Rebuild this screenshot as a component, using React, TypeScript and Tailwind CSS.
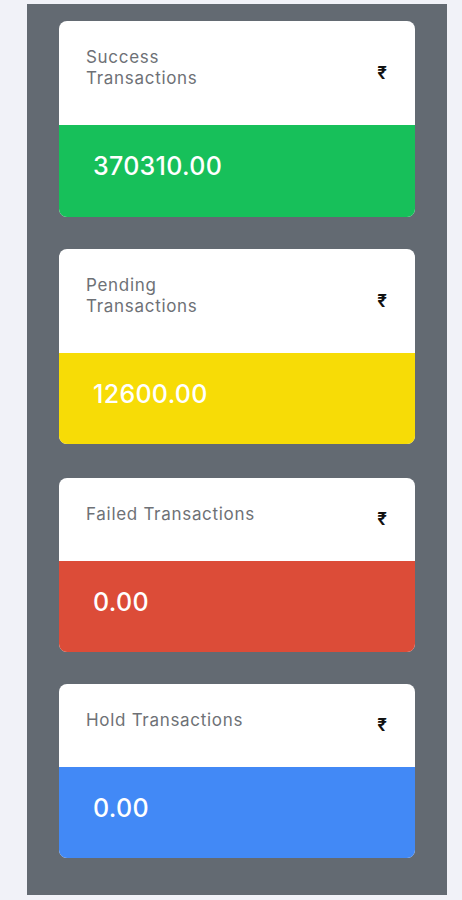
import React from 'react';

type Stat = {
  title: React.ReactNode;
  amount: string;
  color: string;
  header: string;
  body: string;
};

const stats: Stat[] = [
  {
    title: (
      <>
        Success
        <br />
        Transactions
      </>
    ),
    amount: '370310.00',
    color: 'bg-[#17c05a]',
    header: 'h-[104px]',
    body: 'h-[92px]',
  },
  {
    title: (
      <>
        Pending
        <br />
        Transactions
      </>
    ),
    amount: '12600.00',
    color: 'bg-[#f7dc06]',
    header: 'h-[104px]',
    body: 'h-[91px]',
  },
  {
    title: 'Failed Transactions',
    amount: '0.00',
    color: 'bg-[#dc4c38]',
    header: 'h-[83px]',
    body: 'h-[91px]',
  },
  {
    title: 'Hold Transactions',
    amount: '0.00',
    color: 'bg-[#4289f6]',
    header: 'h-[83px]',
    body: 'h-[91px]',
  },
];

function StatCard({ title, amount, color, header, body }: Stat) {
  return (
    <div className="rounded-lg overflow-hidden bg-white">
      {/* Header */}
      <div className={`${header} flex items-center justify-between pl-[27px] pr-[28px]`}>
        <p className="mb-[10px] text-[17px] leading-[21px] text-[#6e7176] tracking-[0.7px]">
          {title}
        </p>
        <span className="text-[17px] font-bold text-[#111] leading-none">₹</span>
      </div>

      {/* Amount */}
      <div className={`${color} ${body} flex items-center pl-[34px]`}>
        <span className="mb-[8px] text-[25px] font-medium text-white tracking-[0.3px]">
          {amount}
        </span>
      </div>
    </div>
  );
}

export default function App() {
  return (
    <div
      className="min-h-[900px] bg-[#f1f2f8] pt-[4px] pl-[27px] pr-[15px]"
      style={{ fontFamily: 'Inter, "Noto Sans", sans-serif' }}
    >
      <div className="bg-[#636a72] h-[891px] px-[32px] pt-[17px] flex flex-col">
        <StatCard {...stats[0]} />
        <div className="mt-[32px]">
          <StatCard {...stats[1]} />
        </div>
        <div className="mt-[34px]">
          <StatCard {...stats[2]} />
        </div>
        <div className="mt-[32px]">
          <StatCard {...stats[3]} />
        </div>
      </div>
    </div>
  );
}
